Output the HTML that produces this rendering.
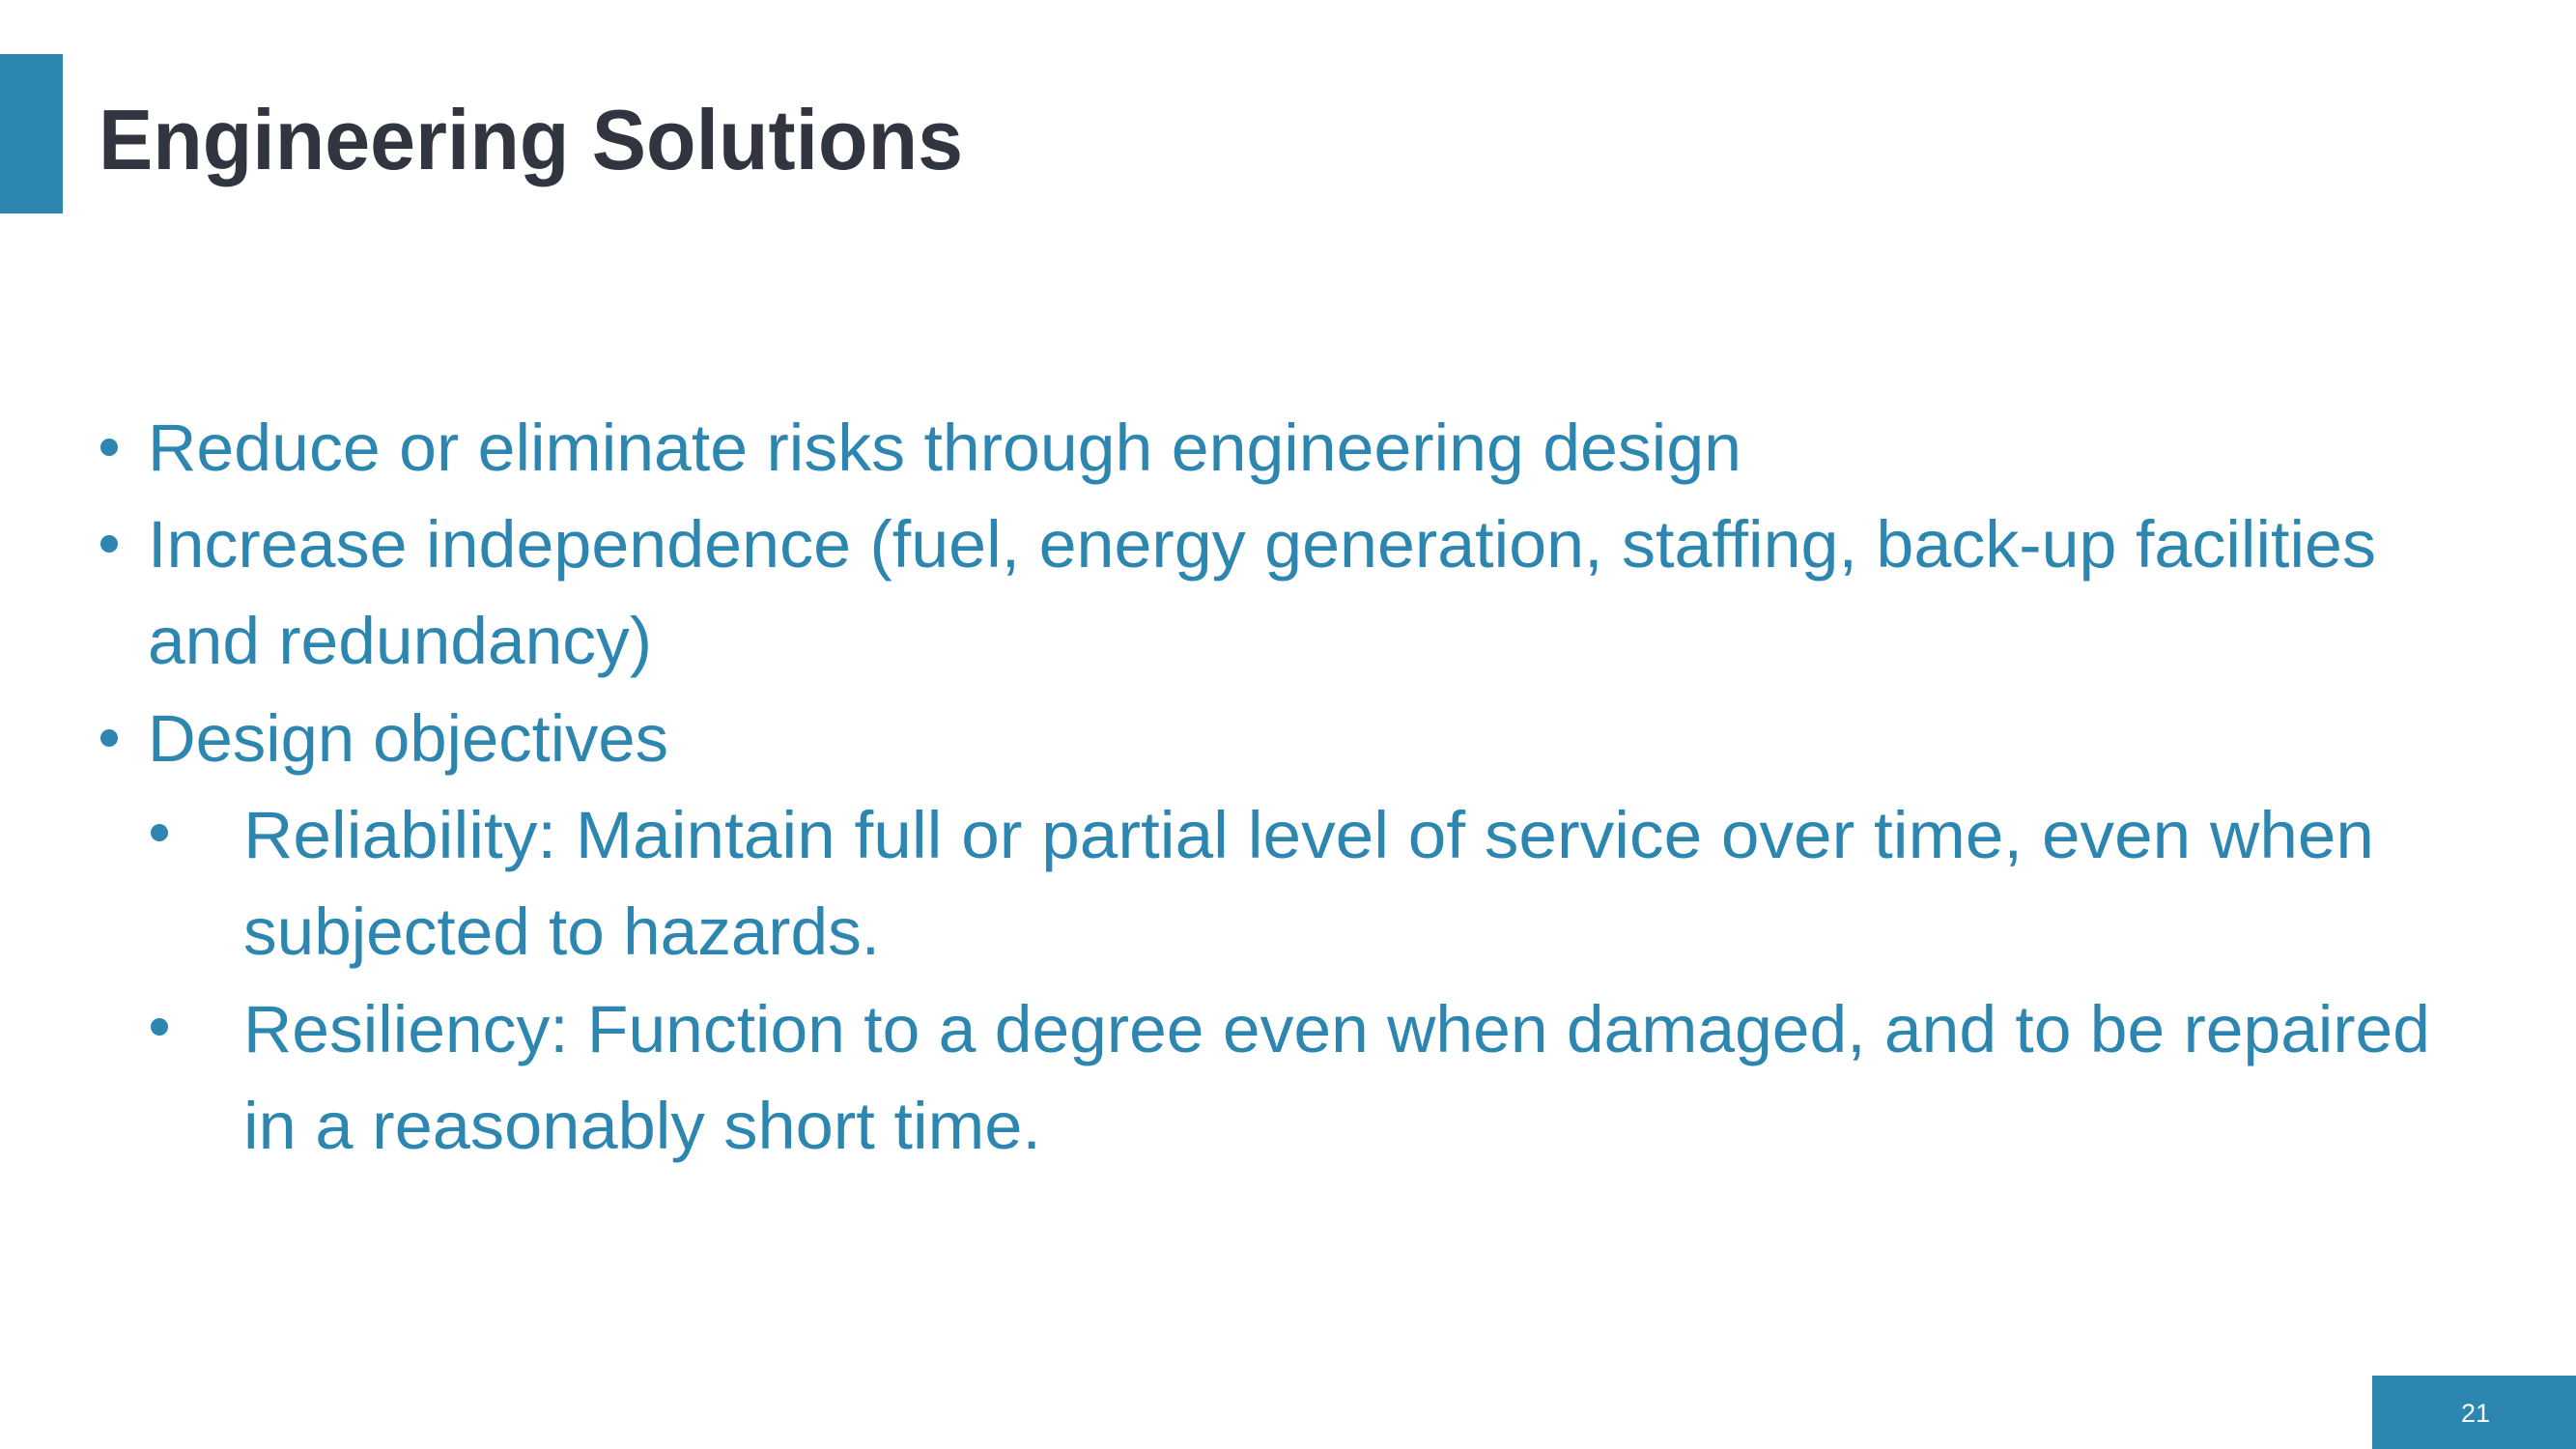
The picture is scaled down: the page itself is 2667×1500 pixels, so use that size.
<!DOCTYPE html>
<html><head><meta charset="utf-8"><style>
html,body{margin:0;padding:0;background:#fff;}
body{width:2667px;height:1500px;position:relative;overflow:hidden;}
svg{position:absolute;left:0;top:0;}
</style></head><body>
<svg width="2667" height="1500" viewBox="0 0 2667 1500" xmlns="http://www.w3.org/2000/svg">
<rect x="0" y="56" width="65" height="165" fill="#2d86b0"/>
<text x="102" y="175" font-family="Liberation Sans, sans-serif" font-weight="bold" font-size="88" fill="#31353f" textLength="895" lengthAdjust="spacingAndGlyphs">Engineering Solutions</text>
<g font-family="Liberation Sans, sans-serif" font-size="69" fill="#2d86b0">
<circle cx="113" cy="463" r="9"/>
<text x="153" y="487" textLength="1650" lengthAdjust="spacingAndGlyphs">Reduce or eliminate risks through engineering design</text>
<circle cx="113" cy="563" r="9"/>
<text x="153" y="587" textLength="2307" lengthAdjust="spacingAndGlyphs">Increase independence (fuel, energy generation, staffing, back-up facilities</text>
<text x="153" y="687" textLength="522" lengthAdjust="spacingAndGlyphs">and redundancy)</text>
<circle cx="113" cy="764" r="9"/>
<text x="153" y="788" textLength="539" lengthAdjust="spacingAndGlyphs">Design objectives</text>
<circle cx="165" cy="862" r="9"/>
<text x="252" y="888" textLength="2206" lengthAdjust="spacingAndGlyphs">Reliability: Maintain full or partial level of service over time, even when</text>
<text x="252" y="988" textLength="659" lengthAdjust="spacingAndGlyphs">subjected to hazards.</text>
<circle cx="165" cy="1063" r="9"/>
<text x="252" y="1089" textLength="2264" lengthAdjust="spacingAndGlyphs">Resiliency: Function to a degree even when damaged, and to be repaired</text>
<text x="252" y="1189" textLength="826" lengthAdjust="spacingAndGlyphs">in a reasonably short time.</text>
</g>
<rect x="2456" y="1424" width="211" height="76" fill="#2d86b0"/>
<text x="2563" y="1472" text-anchor="middle" font-family="Liberation Sans, sans-serif" font-size="27" fill="#ffffff">21</text>
</svg>
</body></html>
